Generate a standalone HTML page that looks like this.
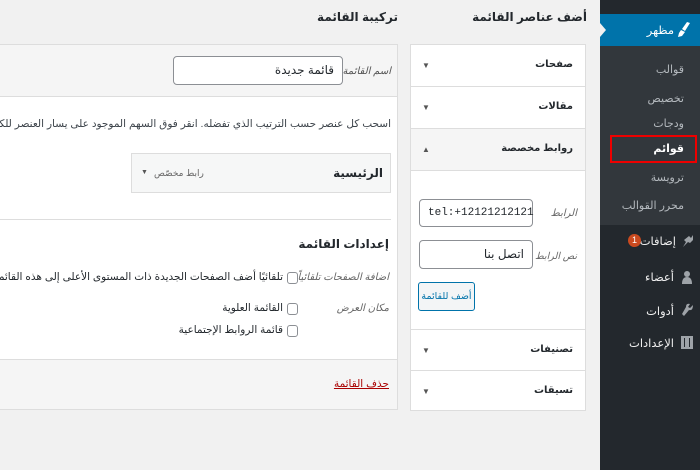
<!DOCTYPE html>
<html dir="rtl"><head><meta charset="utf-8">
<style>
*{margin:0;padding:0;box-sizing:border-box}
body{width:700px;height:470px;overflow:hidden;background:#f1f1f1;font-family:"Liberation Sans","Noto Sans CJK SC","DejaVu Sans",sans-serif;font-size:11px;color:#23282d;position:relative}
.a{position:absolute}
.sb{left:600px;top:0;width:100px;height:470px;background:#23282d}
.sub{left:600px;top:46px;width:100px;height:179px;background:#32373c}
.mi{position:absolute;right:10px;color:#eee;font-size:11.5px;white-space:nowrap}
.si{position:absolute;right:16px;color:#b4b9be;font-size:11px;white-space:nowrap}
.box{background:#fff;border:1px solid #ddd}
.sec{position:absolute;left:0;width:100%;height:42px;border-bottom:1px solid #ddd}
.sec b{position:absolute;right:12px;top:14px;font-size:10px}
.sec i{position:absolute;left:11px;top:16px;font-style:normal;font-size:8px;color:#555}
.inp{position:absolute;border:1px solid #8c8f94;border-radius:4px;background:#fff;font-size:12px;padding:0 8px;line-height:26px}
.cb{position:absolute;width:11px;height:12px;border:1px solid #8c8f94;border-radius:3px;background:#fff}
.lbl{position:absolute;color:#666;font-style:italic;font-size:10px;white-space:nowrap}
</style></head><body>
<div class="a sb"></div>
<div class="a" style="left:600px;top:14px;width:100px;height:32px;background:#0073aa"></div>
<div class="a" style="left:600px;top:23px;width:0;height:0;border-top:7px solid transparent;border-bottom:7px solid transparent;border-left:6px solid #f1f1f1"></div>
<svg class="a" style="left:677px;top:22px" width="14" height="16" viewBox="0 0 14 16"><path d="M13 1 L10 0 L5 7 L8 9 Z M4 8 L8 10 L5 14 L1 15 L2 11 Z" fill="#fff"/></svg>
<div class="mi" style="top:23px;right:26px;color:#fff">مظهر</div>
<div class="a sub"></div>
<div class="si" style="top:63px">قوالب</div>
<div class="si" style="top:92px">تخصيص</div>
<div class="si" style="top:117px">ودجات</div>
<div class="a" style="left:610px;top:135px;width:87px;height:28px;border:2px solid #e00"></div>
<div class="si" style="top:142px;color:#fff;font-weight:bold">قوائم</div>
<div class="si" style="top:171px">ترويسة</div>
<div class="si" style="top:199px">محرر القوالب</div>
<svg class="a" style="left:680px;top:234px" width="14" height="14"><path d="M3 13 L6 8 L4 6 L9 2 L11 4 L13 1 L13 6 L10 9 L8 8 Z" fill="#9ea3a8"/></svg>
<div class="mi" style="top:234px;right:24px">إضافات</div>
<div class="a" style="left:628px;top:234px;width:13px;height:13px;border-radius:50%;background:#ca4a1f;color:#fff;font-size:9px;text-align:center;line-height:13px">1</div>
<svg class="a" style="left:681px;top:270px" width="12" height="14"><circle cx="6" cy="4" r="3" fill="#9ea3a8"/><path d="M1 14 Q1 7 6 7 Q11 7 11 14Z" fill="#9ea3a8"/></svg>
<div class="mi" style="top:270px;right:26px">أعضاء</div>
<svg class="a" style="left:681px;top:303px" width="13" height="14"><path d="M12 2 L9 5 L7 4 L9 1 Q5 0 5 4 L1 11 L3 13 L8 7 Q12 8 12 2Z" fill="#9ea3a8"/></svg>
<div class="mi" style="top:304px;right:26px">أدوات</div>
<div class="a" style="left:681px;top:336px;width:12px;height:13px;background:#9ea3a8"></div>
<div class="a" style="left:684px;top:338px;width:1px;height:9px;background:#23282d"></div>
<div class="a" style="left:689px;top:338px;width:1px;height:9px;background:#23282d"></div>
<div class="mi" style="top:336px;right:26px">الإعدادات</div>

<div class="a" style="right:113px;top:10px;font-size:12px;font-weight:bold">أضف عناصر القائمة</div>
<div class="a box" style="left:410px;top:44px;width:176px;height:367px;overflow:hidden">
 <div class="sec" style="top:0"><b>صفحات</b><i>▼</i></div>
 <div class="sec" style="top:42px"><b>مقالات</b><i>▼</i></div>
 <div class="sec" style="top:84px;background:#f5f5f5"><b>روابط مخصصة</b><i>▲</i></div>
 <div class="lbl" style="right:8px;top:163px">الرابط</div>
 <div class="inp" style="left:8px;top:154px;width:114px;height:28px;direction:ltr;text-align:left;font-family:'Liberation Mono',monospace;font-size:11px">tel:+12121212121</div>
 <div class="lbl" style="right:8px;top:206px;font-size:9.5px">نص الرابط</div>
 <div class="inp" style="left:8px;top:195px;width:114px;height:29px">اتصل بنا</div>
 <div class="a" style="left:7px;top:237px;width:57px;height:29px;border:1px solid #0073aa;border-radius:3px;background:#f3f5f6;color:#0073aa;font-size:9.5px;text-align:center;line-height:27px;white-space:nowrap">أضف للقائمة</div>
 <div class="sec" style="top:284px;border-top:1px solid #ddd"><b>تصنيفات</b><i>▼</i></div>
 <div class="sec" style="top:326px;border-bottom:0"><b>تسيقات</b><i>▼</i></div>
</div>

<div class="a" style="right:302px;top:10px;font-size:12px;font-weight:bold">تركيبة القائمة</div>
<div class="a box" style="left:-2px;top:44px;width:400px;height:366px;overflow:hidden">
 <div class="a" style="left:0;top:0;width:100%;height:52px;background:#f5f5f5;border-bottom:1px solid #ddd"></div>
 <div class="lbl" style="right:6px;top:21px;color:#555">اسم القائمة</div>
 <div class="inp" style="left:174px;top:11px;width:170px;height:29px">قائمة جديدة</div>
 <div class="a" style="right:6px;top:73px;font-size:10.5px;white-space:nowrap;color:#3c434a">اسحب كل عنصر حسب الترتيب الذي تفضله. انقر فوق السهم الموجود على يسار العنصر للكشف عن خيارات تهيئة إضافية.</div>
 <div class="a" style="left:132px;top:108px;width:260px;height:40px;background:#f6f7f7;border:1px solid #ddd"></div>
 <div class="a" style="right:14px;top:121px;font-size:12px;font-weight:bold">الرئيسية</div>
 <div class="a" style="left:155px;top:123px;font-size:9px;color:#666;white-space:nowrap">رابط مخصّص</div>
 <div class="a" style="left:142px;top:124px;font-size:7px;color:#555">▼</div>
 <div class="a" style="left:0;top:174px;width:392px;height:1px;background:#ddd"></div>
 <div class="a" style="right:8px;top:192px;font-size:12px;font-weight:bold">إعدادات القائمة</div>
 <div class="lbl" style="right:8px;top:227px">اضافة الصفحات تلقائياً</div>
 <div class="cb" style="left:288px;top:227px"></div>
 <div class="a" style="right:114px;top:226px;font-size:10.5px;white-space:nowrap">تلقائيًا أضف الصفحات الجديدة ذات المستوى الأعلى إلى هذه القائمة</div>
 <div class="lbl" style="right:8px;top:258px">مكان العرض</div>
 <div class="cb" style="left:288px;top:258px"></div>
 <div class="a" style="right:114px;top:257px;font-size:10.5px">القائمة العلوية</div>
 <div class="cb" style="left:288px;top:280px"></div>
 <div class="a" style="right:114px;top:279px;font-size:10.5px">قائمة الروابط الإجتماعية</div>
 <div class="a" style="left:0;top:314px;width:100%;height:52px;background:#f5f5f5;border-top:1px solid #ddd"></div>
 <div class="a" style="right:8px;top:333px;font-size:10.5px;color:#a00;text-decoration:underline">حذف القائمة</div>
</div>
</body></html>
